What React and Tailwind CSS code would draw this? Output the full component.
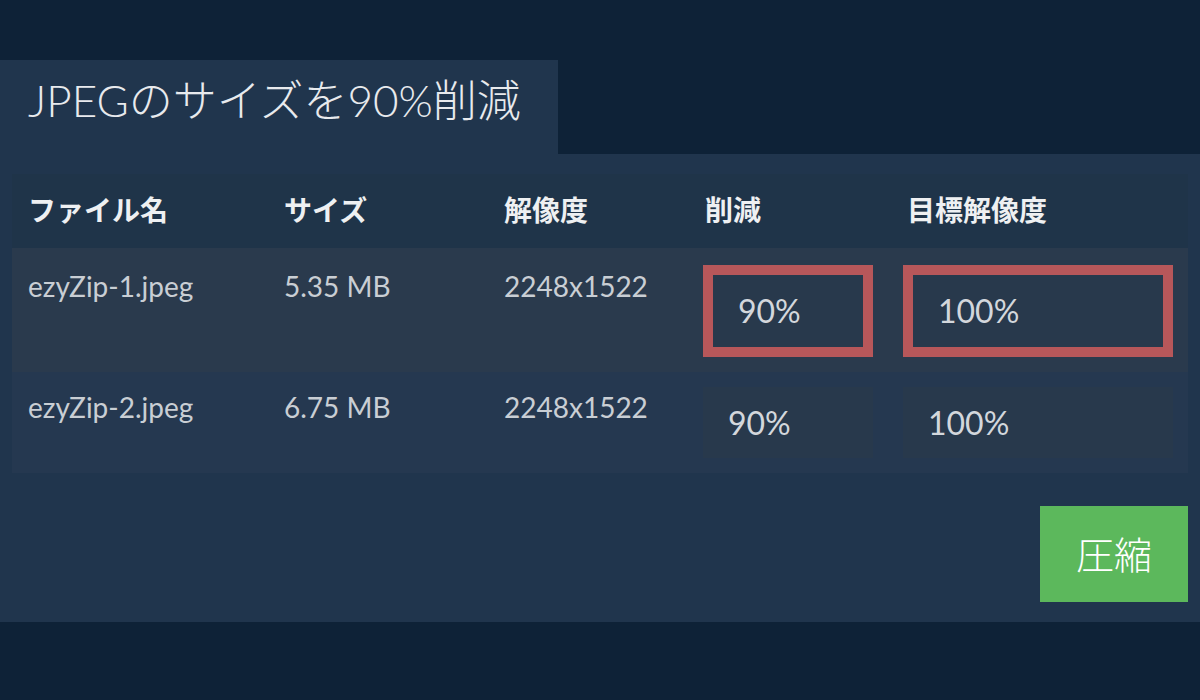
export default function App() {
  const rows = [
    { name: "ezyZip-1.jpeg", size: "5.35 MB", res: "2248x1522", red: "90%", tgt: "100%", active: true },
    { name: "ezyZip-2.jpeg", size: "6.75 MB", res: "2248x1522", red: "90%", tgt: "100%", active: false },
  ];
  return (
    <div className="w-[1200px] h-[700px] bg-[#0e2237] pt-[60px] font-['Lato','Noto_Sans_CJK_JP',sans-serif]">
      <div className="w-[558px] h-[94px] bg-[#20354d] flex items-center pl-[28px]">
        <h1 className="text-[44px] leading-none font-light text-[#e8eaed] pb-[14px]">JPEGのサイズを90%削減</h1>
      </div>
      <div className="bg-[#20354d] px-[12px] pt-[20px] pb-[20px]">
        <div className="bg-[#1f3449]">
          <div className="grid grid-cols-[256px_220px_199px_200px_1fr] h-[74px] items-center text-[28px] font-bold text-[#eef0f2] pb-[2px]">
            <div className="pl-[16px]">ファイル名</div>
            <div className="pl-[16px]">サイズ</div>
            <div className="pl-[16px]">解像度</div>
            <div className="pl-[18px]">削減</div>
            <div className="pl-[20px]">目標解像度</div>
          </div>
          {rows.map((r, i) => (
            <div
              key={i}
              className={
                "grid grid-cols-[256px_220px_199px_200px_1fr] text-[28px] text-[#c9ced4] " +
                (r.active ? "h-[124px] bg-[#2a3a4d]" : "h-[101px] bg-[#253850]")
              }
            >
              <div className={"pl-[16px] " + (r.active ? "pt-[17px]" : "pt-[14px]")}>{r.name}</div>
              <div className={"pl-[16px] " + (r.active ? "pt-[17px]" : "pt-[14px]")}>{r.size}</div>
              <div className={"pl-[16px] " + (r.active ? "pt-[17px]" : "pt-[14px]")}>{r.res}</div>
              <div className={"pl-[16px] " + (r.active ? "pt-[17px]" : "pt-[15px]")}>
                <div
                  className={
                    "w-[170px] flex items-center pl-[25px] bg-[#28394c] text-[32px] text-[#d3d7dc] " +
                    (r.active ? "h-[92px] border-[10px] border-[#b7575a]" : "h-[71px]")
                  }
                >
                  {r.red}
                </div>
              </div>
              <div className={"pl-[16px] " + (r.active ? "pt-[17px]" : "pt-[15px]")}>
                <div
                  className={
                    "w-[270px] flex items-center pl-[25px] bg-[#28394c] text-[32px] text-[#d3d7dc] " +
                    (r.active ? "h-[92px] border-[10px] border-[#b7575a]" : "h-[71px]")
                  }
                >
                  {r.tgt}
                </div>
              </div>
            </div>
          ))}
        </div>
        <div className="flex justify-end mt-[33px]">
          <button className="w-[148px] h-[96px] bg-[#5cb85c] text-white text-[38px] font-light flex items-center justify-center">
            圧縮
          </button>
        </div>
      </div>
    </div>
  );
}
